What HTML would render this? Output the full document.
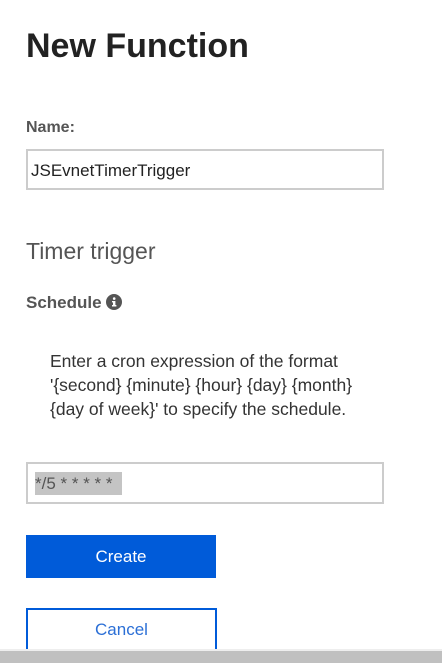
<!DOCTYPE html>
<html><head><style>
body{margin:0;width:442px;height:663px;overflow:hidden;background:#fff;font-family:"Liberation Sans",sans-serif;position:relative}
div{position:absolute}
.t{left:26px;top:27px;font-size:34px;font-weight:bold;color:#222}
.lbl{font-size:16px;font-weight:bold;color:#555}
.inp{left:26px;width:354px;border:2px solid #ccc;background:#fff}
</style></head><body>
<div class="t">New Function</div>
<div class="lbl" style="left:26px;top:119px">Name:</div>
<div class="inp" style="top:149px;height:37px"><span style="position:absolute;left:3px;top:10px;font-size:17px;color:#222">JSEvnetTimerTrigger</span></div>
<div style="left:26px;top:238px;font-size:23px;color:#555">Timer trigger</div>
<div class="lbl" style="left:26px;top:293px;font-size:17px">Schedule <svg width="16" height="16" viewBox="0 0 16 16" style="vertical-align:-2px"><circle cx="8" cy="8" r="8" fill="#555"/><rect x="7" y="7" width="2.4" height="5" fill="#fff"/><rect x="6" y="11" width="4.4" height="1.5" fill="#fff"/><rect x="6" y="7" width="2" height="1.4" fill="#fff"/><circle cx="8.2" cy="4.6" r="1.3" fill="#fff"/></svg></div>
<div style="left:50px;top:349px;font-size:17.5px;line-height:24px;color:#333">Enter a cron expression of the format<br>'{second} {minute} {hour} {day} {month}<br>{day of week}' to specify the schedule.</div>
<div class="inp" style="top:462px;height:38px"><span style="position:absolute;left:7px;top:8px;height:23px;width:87px;background:#c4c4c4;font-size:17px;color:#555;line-height:23px">*/5 * * * * *</span></div>
<div style="left:26px;top:535px;width:190px;height:43px;background:#005bd9;color:#fff;font-size:17px;text-align:center;line-height:43px">Create</div>
<div style="left:26px;top:608px;width:187px;height:39px;border:2px solid #005bd9;color:#2b6fd6;font-size:17px;text-align:center;line-height:39px">Cancel</div>
<div style="left:0;top:649px;width:442px;height:2px;background:#eee"></div>
<div style="left:0;top:651px;width:442px;height:12px;background:#c0c0c0"></div>
</body></html>
